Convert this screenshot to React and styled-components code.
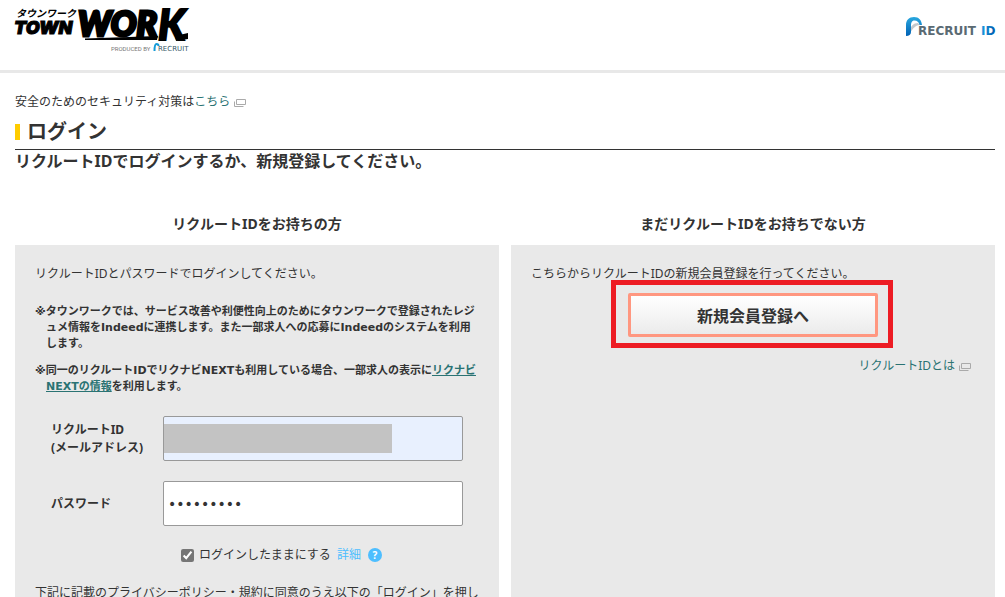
import React from 'react';
import styled, { createGlobalStyle } from 'styled-components';

const GlobalStyle = createGlobalStyle`
  * {
    box-sizing: border-box;
  }

  body {
    margin: 0;
    background: #fff;
    color: #333;
    font-family: "Noto Sans", "Noto Sans CJK JP", sans-serif;
    font-size: 12px;
    line-height: 18px;
  }
`;

const Page = styled.div`
  display: flex;
  flex-direction: column;
  height: 100vh;
  overflow: hidden;
`;

const Header = styled.header`
  display: flex;
  flex-shrink: 0;
  justify-content: space-between;
  align-items: flex-start;
  padding: 6px 10px 16px 14px;
  border-bottom: 3px solid #e8e8e8;
`;

const LogoLink = styled.a`
  display: block;
  height: 48px;
  padding-top: ${props => props.$drop || 0}px;

  svg {
    display: block;
    overflow: visible;
  }
`;

const Main = styled.main`
  display: flex;
  flex: 1;
  flex-direction: column;
  padding: 20px 10px 0 15px;
`;

const Security = styled.p`
  margin: 0;
`;

const TextLink = styled.a`
  color: #2a7373;
  text-decoration: ${props => (props.$underline ? 'underline' : 'none')};
`;

const WindowSvg = styled.svg`
  margin-left: 4px;
  vertical-align: -2px;
`;

const Title = styled.h1`
  display: flex;
  align-items: center;
  gap: 7px;
  margin: 7px 0 0;
  padding-bottom: 3px;
  border-bottom: 1px solid #333;
  font-size: 20px;
  line-height: 28px;

  &::before {
    content: "";
    width: 5px;
    height: 16px;
    background: #fc0;
  }
`;

const Lead = styled.p`
  margin: 0;
  font-size: 16px;
  font-weight: bold;
  line-height: 22px;
`;

const Columns = styled.div`
  display: grid;
  flex: 1;
  grid-template-columns: 1fr 1fr;
  gap: 12px;
  margin-top: 42px;
`;

const Column = styled.section`
  display: flex;
  flex-direction: column;
`;

const ColumnTitle = styled.h2`
  margin: 0 0 11px;
  font-size: 14px;
  line-height: 20px;
  text-align: center;
`;

const Panel = styled.div`
  flex: 1;
  padding: 20px 20px 0;
  background: #e9e9e9;
`;

const Text = styled.p`
  margin: 0;
`;

const Notes = styled.div`
  display: grid;
  gap: 11px;
  margin: 21px 0;
  font-family: "DejaVu Sans", "Noto Sans CJK JP", sans-serif;
  font-size: 11px;
  font-weight: bold;
  line-height: 16px;
`;

const Note = styled.p`
  margin: 0;
  padding-left: 11px;
  text-indent: -11px;
`;

const Fields = styled.div`
  display: grid;
  gap: 20px;
  margin: 0 16px;
`;

const Field = styled.div`
  display: grid;
  grid-template-columns: 112px 1fr;
  align-items: center;
`;

const Label = styled.label`
  font-weight: bold;
`;

const InputWrap = styled.div`
  position: relative;
`;

const Input = styled.input`
  display: block;
  width: 100%;
  height: 45px;
  padding: 0 4px;
  border: 1px solid #999;
  border-radius: 2px;
  background: ${props => (props.$filled ? '#e8f0fe' : '#fff')};
  color: #333;
  font-family: "DejaVu Sans", sans-serif;
  font-size: 14px;
`;

// hides the saved address
const Mask = styled.span`
  position: absolute;
  top: 8px;
  left: 1px;
  width: 76%;
  height: 29px;
  background: #c3c3c3;
`;

const Keep = styled.div`
  display: flex;
  justify-content: center;
  align-items: center;
  gap: 6px;
  margin: 20px 0;
  padding-left: 49px;
`;

const KeepLabel = styled.label`
  display: flex;
  align-items: center;
  gap: 5px;
`;

const Checkbox = styled.input`
  width: 13px;
  height: 13px;
  margin: 0;
  accent-color: #767676;
`;

const DetailLink = styled.a`
  display: flex;
  align-items: center;
  gap: 7px;
  color: #4dbeff;
  text-decoration: none;
`;

const Help = styled.span`
  width: 14px;
  height: 14px;
  border-radius: 50%;
  background: #4dbeff;
  color: #fff;
  font-size: 10px;
  font-weight: bold;
  line-height: 14px;
  text-align: center;
`;

const RegisterWrap = styled.div`
  position: relative;
  width: 250px;
  margin: 10px auto 20px;

  &::after {
    content: "";
    position: absolute;
    inset: -13px -15px -11px -17px;
    border: 5px solid #ed1c24;
    pointer-events: none;
  }
`;

const RegisterButton = styled.button`
  display: block;
  width: 100%;
  height: 44px;
  padding: 0;
  border: 3px solid #ff9780;
  border-radius: 2px;
  background: linear-gradient(#fff, #ebebeb);
  color: #333;
  font-family: inherit;
  font-size: 16px;
  font-weight: bold;
  cursor: pointer;
`;

const About = styled.p`
  margin: 0;
  padding-right: 4px;
  text-align: right;
`;

const WindowIcon = () => (
  <WindowSvg width="12" height="10" viewBox="0 0 12 10" fill="none" stroke="#aaa" aria-hidden="true">
    <path d="M2.5 1.5h9v5h-9z" />
    <path d="M.5 3.5v5h9" />
  </WindowSvg>
);

const TownworkLogo = () => (
  <svg width="176" height="48" viewBox="0 0 176 48" role="img" aria-label="タウンワーク TOWN WORK">
    <text x="2" y="11" fontFamily="Noto Sans CJK JP" fontSize="10" fontWeight="700" fontStyle="italic">タウンワーク</text>
    <g fontWeight="900" fontStyle="italic" stroke="#000">
      <text x="0" y="28" fontFamily="Inter" fontSize="18" strokeWidth="1">TOWN</text>
      <text x="64" y="30" fontFamily="Lato" fontSize="34" strokeWidth="3">WOR</text>
      <text x="144" y="34" fontFamily="Lato" fontSize="42" strokeWidth="2">K</text>
    </g>
    <path d="M71 32.5l73-2.500-1 4H71z" />
    <path d="M161 30l13-3v6l-12 2z" />
    <text x="97" y="45" fontFamily="Roboto" fontSize="6" fill="#777">PRODUCED BY</text>
    <path d="M140.500 45c0-5 .5-7 2-7 1.500 0 2 1 2 2" fill="none" stroke="#169bd7" strokeWidth="2" />
    <text x="144" y="45" fontFamily="DejaVu Sans" fontSize="7" fill="#345767">RECRUIT</text>
  </svg>
);

const RecruitIdLogo = () => (
  <svg width="91" height="22" viewBox="0 0 91 22" role="img" aria-label="RECRUIT ID">
    <defs>
      <linearGradient id="arch" x1="0" y1="0" x2="0" y2="1">
        <stop offset="0" stopColor="#29a8df" />
        <stop offset="1" stopColor="#0061b5" />
      </linearGradient>
      <linearGradient id="idText" x1="0" y1="0" x2="1" y2="0">
        <stop offset="0" stopColor="#1b9be0" />
        <stop offset="1" stopColor="#005bac" />
      </linearGradient>
    </defs>
    <path d="M6 15C6.500 10 9.500 7 14 7l2 2c-4 0-7 3-10 8z" fill="#c3c8cc" />
    <path d="M2 20V9C2 4 5 1 10 1c5 0 7.500 3 8 8h-2.500C15 6 13 4.500 10.500 4.500 7.500 4.500 7 7 7 10v6c0 2.500-2 4-5 4z" fill="url(#arch)" />
    <g fontFamily="DejaVu Sans" fontSize="12" fontWeight="bold">
      <text x="14" y="19" fill="#5a6a73">RECRUIT</text>
      <text x="77" y="19" fill="url(#idText)">ID</text>
    </g>
  </svg>
);

export default function App() {
  return (
    <Page>
      <GlobalStyle />
      <Header>
        <LogoLink href="#top"><TownworkLogo /></LogoLink>
        <LogoLink href="#recruit" $drop={10}><RecruitIdLogo /></LogoLink>
      </Header>

      <Main>
        <Security>
          安全のためのセキュリティ対策は<TextLink href="#security">こちら<WindowIcon /></TextLink>
        </Security>
        <Title>ログイン</Title>
        <Lead>リクルートIDでログインするか、新規登録してください。</Lead>

        <Columns>
          <Column>
            <ColumnTitle>リクルートIDをお持ちの方</ColumnTitle>
            <Panel>
              <Text>リクルートIDとパスワードでログインしてください。</Text>
              <Notes>
                <Note>
                  ※タウンワークでは、サービス改善や利便性向上のためにタウンワークで登録されたレジュメ情報をIndeedに連携します。また一部求人への応募にIndeedのシステムを利用します。
                </Note>
                <Note>
                  ※同一のリクルートIDでリクナビNEXTも利用している場合、一部求人の表示に<TextLink href="#next" $underline>リクナビNEXTの情報</TextLink>を利用します。
                </Note>
              </Notes>
              <Fields>
                <Field>
                  <Label htmlFor="mail">リクルートID<br />(メールアドレス)</Label>
                  <InputWrap>
                    <Input id="mail" type="email" $filled />
                    <Mask />
                  </InputWrap>
                </Field>
                <Field>
                  <Label htmlFor="password">パスワード</Label>
                  <Input id="password" type="password" defaultValue="password1" />
                </Field>
              </Fields>
              <Keep>
                <KeepLabel>
                  <Checkbox type="checkbox" defaultChecked />
                  ログインしたままにする
                </KeepLabel>
                <DetailLink href="#detail">詳細<Help>?</Help></DetailLink>
              </Keep>
              <Text>下記に記載のプライバシーポリシー・規約に同意のうえ以下の「ログイン」を押し</Text>
            </Panel>
          </Column>

          <Column>
            <ColumnTitle>まだリクルートIDをお持ちでない方</ColumnTitle>
            <Panel>
              <Text>こちらからリクルートIDの新規会員登録を行ってください。</Text>
              <RegisterWrap>
                <RegisterButton type="button">新規会員登録へ</RegisterButton>
              </RegisterWrap>
              <About>
                <TextLink href="#about">リクルートIDとは<WindowIcon /></TextLink>
              </About>
            </Panel>
          </Column>
        </Columns>
      </Main>
    </Page>
  );
}
